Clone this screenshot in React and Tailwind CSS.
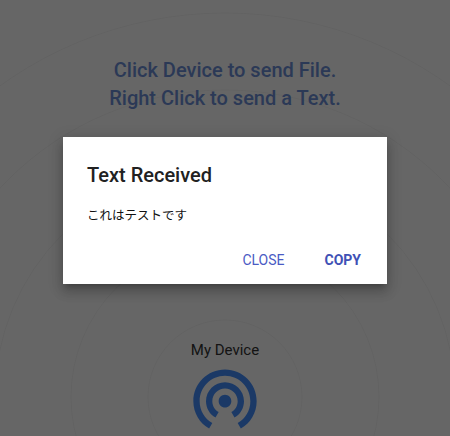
const radii = [77, 154, 230, 307, 384]

function Rings() {
  return (
    <svg className="absolute inset-0" width="450" height="436" viewBox="0 0 450 436" fill="none">
      {radii.map((r) => (
        <circle key={r} cx="225" cy="397" r={r} stroke="#000" strokeOpacity="0.04" strokeWidth="1" />
      ))}
    </svg>
  )
}

function DeviceIcon() {
  return (
    <svg className="block text-[#4490ff]" width="80" height="80" viewBox="0 0 24 24" fill="currentColor">
      <path d="M12 11c-1.1 0-2 .9-2 2s.9 2 2 2 2-.9 2-2-.9-2-2-2zm6 2c0-3.31-2.69-6-6-6s-6 2.69-6 6c0 2.22 1.21 4.15 3 5.19l1-1.74c-1.19-.7-2-1.97-2-3.45 0-2.21 1.79-4 4-4s4 1.79 4 4c0 1.48-.81 2.75-2 3.45l1 1.74c1.79-1.04 3-2.97 3-5.19zM12 3C6.48 3 2 7.48 2 13c0 3.7 2.01 6.92 4.99 8.65l1-1.73C5.61 18.53 4 15.96 4 13c0-4.42 3.58-8 8-8s8 3.58 8 8c0 2.96-1.61 5.53-4 6.92l1 1.73c2.99-1.73 5-4.95 5-8.65 0-5.52-4.48-10-10-10z" />
    </svg>
  )
}

export default function App() {
  return (
    <div className="relative h-[436px] w-[450px] overflow-hidden bg-white font-['Roboto',sans-serif]">
      <Rings />
      <div className="relative flex h-full flex-col items-center">
        <div className="mt-[56px] text-center text-[20px] font-medium leading-[28px] text-[#6d8fd8]">
          <p>Click Device to send File.</p>
          <p>Right Click to send a Text.</p>
        </div>
        <div className="mt-auto flex h-[96px] flex-col items-center">
          <div className="text-[15px] leading-[20px] text-[#333]">My Device</div>
          <DeviceIcon />
        </div>
      </div>

      {/* dialog overlay */}
      <div className="absolute inset-0 flex items-start justify-center bg-black/60 pt-[137px]">
        <div className="flex h-[147px] w-[324px] flex-col bg-white px-6 pt-6 shadow-[0_8px_10px_1px_rgba(0,0,0,0.14),0_3px_14px_2px_rgba(0,0,0,0.12),0_5px_5px_-3px_rgba(0,0,0,0.2)]">
          <h2 className="text-[20px] font-medium leading-[28px] text-[#212121]">Text Received</h2>
          <p className="mt-[16px] font-['Noto_Sans_CJK_JP',sans-serif] text-[12.5px] leading-[20px] text-[#111]">
            これはテストです
          </p>
          <div className="-mr-[14px] mt-auto mb-[12px] flex justify-end gap-[8px] text-[14px] leading-[20px]">
            <button className="px-[16px] py-[2px] text-[#4a5bc4]">CLOSE</button>
            <button className="px-[16px] py-[2px] font-bold text-[#3f51b5]">COPY</button>
          </div>
        </div>
      </div>
    </div>
  )
}
